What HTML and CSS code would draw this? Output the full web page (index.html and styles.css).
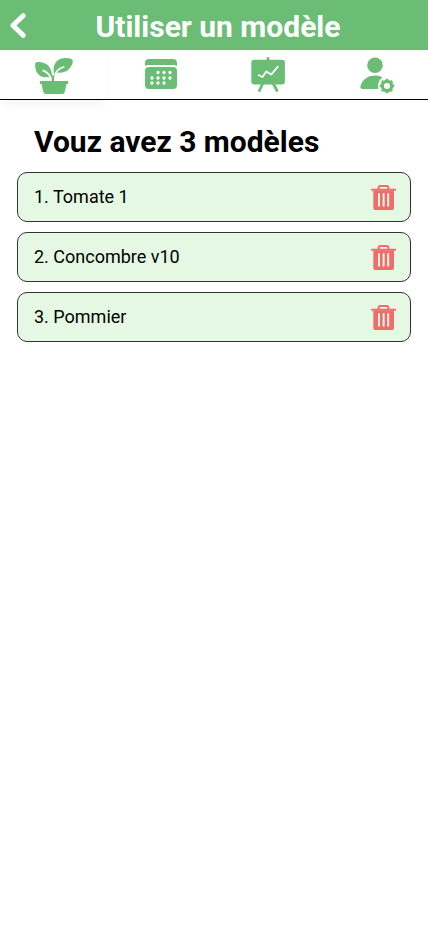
FILE: index.html
```html
<!DOCTYPE html>
<html lang="fr">
<head>
<meta charset="utf-8">
<title>Utiliser un modèle</title>
<link rel="stylesheet" href="styles.css">
</head>
<body>
<header class="header">
  <svg class="back" viewBox="0 0 30 50"><path d="M23.2 15.7 12.9 25.5 23.2 35.3"/></svg>
  <h1 class="title">Utiliser un modèle</h1>
</header>
<nav class="nav">
  <a class="tab active"><svg viewBox="50 50 107 49" preserveAspectRatio="none"><g transform="translate(50 0)">
    <path d="M35.2 63.2C36 61.8 40 61.7 43.5 62.8C48 64.2 51 68 51.7 73L52.3 78L47.8 77C45 77.4 42.6 77 41 76.2C36.5 74.2 34.8 68.5 35.2 63.2Z"/>
    <path d="M53.7 70.5C53.1 64.5 56.5 59.6 62 58.4C66.5 57.4 71.5 58 72.6 60C73.4 62.3 71.5 67 68 70C64.8 72.5 61 73 57.5 72.4L54.2 76Z"/>
    <path class="stem" d="M52.9 82V76.5"/>
    <path class="vein" d="M43.2 70.6Q48 72 50.6 77.4M55.2 74.2Q57.5 68.7 63.6 67"/>
    <path d="M40.6 81H67.4Q68.3 81 68.3 82V83Q68.3 84 67.3 84H66.5L64.9 91.5Q64.3 94 62 94H46Q43.7 94 43.1 91.5L41.5 84H40.8Q39.8 84 39.8 83V82Q39.8 81 40.6 81Z"/>
  </g></svg></a>
  <a class="tab"><svg viewBox="107 50 107 49">
    <path d="M145 66V63Q145 59 149 59H173Q177 59 177 63V66Q175.5 65 173 65H149Q146.5 65 145 66Z"/>
    <rect x="145" y="67" width="32" height="22" rx="4"/>
    <path class="dots" d="M158 72.5h.01M164 72.5h.01M170 72.5h.01M152 78h.01M158 78h.01M164 78h.01M170 78h.01M152 83h.01M158 83h.01M164 83h.01"/>
  </svg></a>
  <a class="tab"><svg viewBox="214 50 107 49">
    <path class="legs" d="M268 58.5V62M263.5 82 259.4 90.5M272.5 82 276.9 90.5"/>
    <rect x="251.3" y="59.7" width="33.6" height="24.8" rx="3"/>
    <path class="chart" d="M258.7 75.3 262.5 77 266.3 71.5 271.2 74.6 277.8 66.7"/>
  </svg></a>
  <a class="tab"><svg viewBox="321 50 107 49">
    <circle cx="375" cy="65.3" r="7.8"/>
    <path d="M362.4 89C360.1 89 360 87 361 84.6C363.4 79 368.5 75.6 375 75.6C378 75.6 380.5 76.2 382.4 77.6C379.3 79.8 377.7 83 378.2 86.3V89Z"/>
    <circle class="gear" cx="387" cy="86" r="4.7"/>
    <path class="teeth" d="M387 80.7V78.7M387 91.3V93.3M381.7 86H379.7M392.3 86H394.3M383.2 82.2 381.8 80.8M390.8 89.8 392.2 91.2M383.2 89.8 381.8 91.2M390.8 82.2 392.2 80.8"/>
  </svg></a>
</nav>
<main class="content">
  <h2 class="heading">Vouz avez 3 modèles</h2>
  <div class="list">
    <div class="row"><span>1. Tomate 1</span><svg class="trash" viewBox="0 0 26 26"><use href="#trash"/></svg></div>
    <div class="row"><span>2. Concombre v10</span><svg class="trash" viewBox="0 0 26 26"><use href="#trash"/></svg></div>
    <div class="row"><span>3. Pommier</span><svg class="trash" viewBox="0 0 26 26"><use href="#trash"/></svg></div>
  </div>
</main>
<svg class="defs"><defs><g id="trash">
  <path class="lid" d="M7.6 5V3.8Q7.6 2 9.6 2H15.4Q17.4 2 17.4 3.8V5M1 5.8H24.2"/>
  <path d="M2.3 6.4H23V23.4Q23 26 20.4 26H5Q2.3 26 2.3 23.4Z"/>
  <path class="slots" d="M8 10V21.7M12.6 10V21.7M17.2 10V21.7"/>
</g></defs></svg>
</body>
</html>
```
FILE: styles.css
```css
* { box-sizing: border-box; }
body {
  margin: 0;
  min-height: 926px;
  background: #fff;
  color: #000;
  font-family: Roboto, sans-serif;
}
.header {
  display: flex;
  height: 50px;
  background: #6bbd76;
}
.back {
  width: 30px;
  height: 50px;
  fill: none;
  stroke: #fff;
  stroke-width: 5;
  stroke-linecap: round;
  stroke-linejoin: round;
}
.title {
  flex: 1;
  margin: 0;
  padding: 2px 22px 0 0;
  color: #fff;
  font-size: 30px;
  line-height: 50px;
  font-weight: 700;
  text-align: center;
}
.nav {
  display: grid;
  grid-template-columns: repeat(4, 1fr);
  height: 50px;
  border-bottom: 1px solid #000;
}
.tab { height: 49px; }
.active { box-shadow: 0 8px 10px -3px rgba(0, 0, 0, .05); }
.tab svg { display: block; width: 107px; height: 49px; fill: #6bbd76; }
.tab .vein, .tab .stem, .tab .chart, .tab .dots, .tab .legs, .tab .gear, .tab .teeth {
  fill: none;
  stroke: #fff;
  stroke-linecap: round;
  stroke-linejoin: round;
}
.tab .vein { stroke-width: 1.8; }
.tab .stem { stroke: #6bbd76; stroke-width: 2.4; }
.tab .dots { stroke-width: 3.3; }
.tab .legs { stroke: #6bbd76; stroke-width: 2.8; }
.tab .chart { stroke-width: 1.8; }
.tab .gear { stroke: #6bbd76; stroke-width: 3.3; }
.tab .teeth { stroke: #6bbd76; stroke-width: 2.6; stroke-linecap: butt; }
.content { padding: 22px 17px 0; }
.heading {
  margin: 0 0 10px;
  padding-left: 17px;
  font-size: 30px;
  line-height: 40px;
  font-weight: 700;
}
.list { display: flex; flex-direction: column; gap: 10px; }
.row {
  display: flex;
  align-items: center;
  justify-content: space-between;
  height: 50px;
  padding: 0 13px 0 16px;
  border: 1px solid #333;
  border-radius: 10px;
  background: #e4f8e4;
  font-size: 18px;
}
.row span { padding-bottom: 1px; }
.trash { width: 26px; height: 26px; fill: #f26b6b; }
.lid { fill: none; stroke: #f26b6b; stroke-width: 2; stroke-linecap: round; }
.slots { fill: none; stroke: #e4f8e4; stroke-width: 2; stroke-linecap: round; }
.defs { position: absolute; width: 0; height: 0; }
```
